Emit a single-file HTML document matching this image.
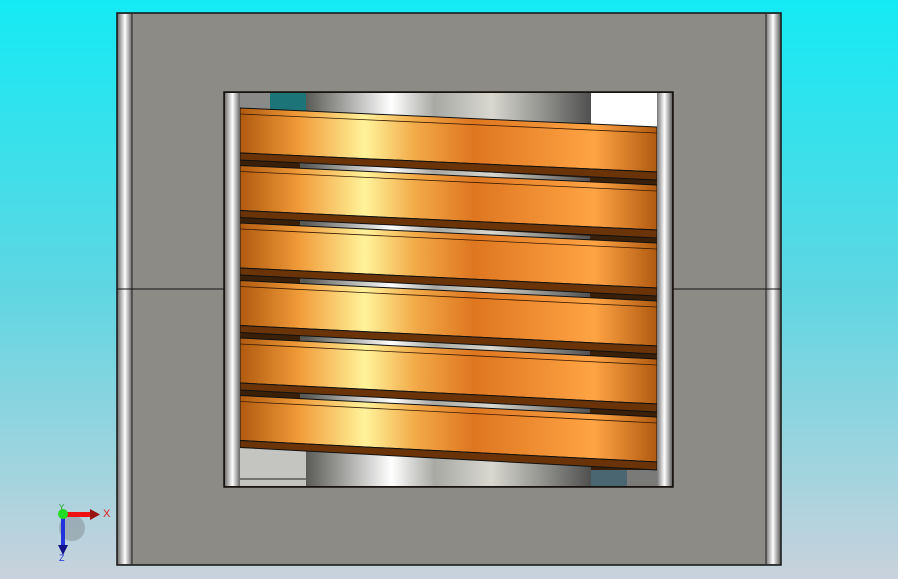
<!DOCTYPE html>
<html><head><style>
html,body{margin:0;padding:0;width:898px;height:579px;overflow:hidden}
</style></head><body>
<svg width="898" height="579" xmlns="http://www.w3.org/2000/svg">
<defs>
<linearGradient id="bg" x1="0" y1="0" x2="0" y2="1">
<stop offset="0" stop-color="#14eaf4"/><stop offset="0.5" stop-color="#5fd6e2"/><stop offset="1" stop-color="#c9d2dc"/>
</linearGradient>
<linearGradient id="cu" x1="240" y1="0" x2="657" y2="0" gradientUnits="userSpaceOnUse">
<stop offset="0" stop-color="#b05a10"/><stop offset="0.14" stop-color="#f09a38"/><stop offset="0.3" stop-color="#fff39a"/><stop offset="0.42" stop-color="#f2aa48"/><stop offset="0.56" stop-color="#de7620"/><stop offset="0.85" stop-color="#ffa444"/><stop offset="1" stop-color="#b05a10"/>
</linearGradient>
<linearGradient id="ag" x1="306" y1="0" x2="591" y2="0" gradientUnits="userSpaceOnUse">
<stop offset="0" stop-color="#5a5a56"/><stop offset="0.3" stop-color="#ffffff"/><stop offset="0.45" stop-color="#a8a8a4"/><stop offset="0.65" stop-color="#d8d8d0"/><stop offset="1" stop-color="#505050"/>
</linearGradient>
<linearGradient id="rod" x1="0" y1="0" x2="1" y2="0">
<stop offset="0" stop-color="#777"/><stop offset="0.5" stop-color="#fff"/><stop offset="1" stop-color="#666"/>
</linearGradient>
</defs>
<rect width="898" height="579" fill="url(#bg)"/>
<rect x="117" y="13" width="664" height="552" fill="#8d8b86" stroke="#111" stroke-width="1.5"/>
<rect x="118" y="14" width="14" height="550" fill="url(#rod)"/>
<rect x="766" y="14" width="14" height="550" fill="url(#rod)"/>
<line x1="132" y1="14" x2="132" y2="564" stroke="#222"/>
<line x1="766" y1="14" x2="766" y2="564" stroke="#222"/>
<line x1="117" y1="289" x2="781" y2="289" stroke="#111"/>
<rect x="224" y="92" width="449" height="395" fill="#3a2008" stroke="#111" stroke-width="1.5"/>
<rect x="240" y="93" width="35" height="22" fill="#8a8a88"/>
<rect x="270" y="93" width="36" height="22" fill="#1c7478"/>
<rect x="306" y="93" width="285" height="30" fill="url(#ag)"/>
<rect x="591" y="93" width="66" height="40" fill="#fff"/>
<rect x="240" y="445" width="66" height="41" fill="#c4c4c0"/>
<line x1="240" y1="479" x2="306" y2="479" stroke="#222"/>
<rect x="306" y="450" width="285" height="36" fill="url(#ag)"/>
<rect x="591" y="470" width="36" height="16" fill="#4a6670"/>
<rect x="627" y="470" width="30" height="16" fill="#7a7a78"/>
<g>
<polygon points="300,162 590,178 590,188 300,168" fill="url(#ag)"/>
<polygon points="300,220 590,236 590,246 300,226" fill="url(#ag)"/>
<polygon points="300,277 590,293 590,303 300,283" fill="url(#ag)"/>
<polygon points="300,335 590,351 590,361 300,341" fill="url(#ag)"/>
<polygon points="300,392 590,408 590,418 300,398" fill="url(#ag)"/>
</g>
<g stroke="#111" stroke-width="1">
<polygon points="240,108 657,127 657,172 240,153" fill="url(#cu)"/>
<polygon points="240,153 657,172 657,180 240,160" fill="#6a3408"/>
<polygon points="240,165.5 657,185 657,230 240,210.5" fill="url(#cu)"/>
<polygon points="240,210.5 657,230 657,238 240,217.5" fill="#6a3408"/>
<polygon points="240,223 657,243 657,288 240,268" fill="url(#cu)"/>
<polygon points="240,268 657,288 657,296 240,275" fill="#6a3408"/>
<polygon points="240,280.5 657,301 657,346 240,325.5" fill="url(#cu)"/>
<polygon points="240,325.5 657,346 657,354 240,332.5" fill="#6a3408"/>
<polygon points="240,338 657,359 657,404 240,383" fill="url(#cu)"/>
<polygon points="240,383 657,404 657,412 240,390" fill="#6a3408"/>
<polygon points="240,395.5 657,417 657,462 240,440.5" fill="url(#cu)"/>
<polygon points="240,440.5 657,462 657,470 240,447.5" fill="#6a3408"/>
</g>
<g stroke="#3a1a04" stroke-width="0.8" fill="none">
<line x1="240" y1="114" x2="657" y2="133"/>
<line x1="240" y1="171.5" x2="657" y2="191"/>
<line x1="240" y1="229" x2="657" y2="249"/>
<line x1="240" y1="286.5" x2="657" y2="307"/>
<line x1="240" y1="344" x2="657" y2="365"/>
<line x1="240" y1="401.5" x2="657" y2="423"/>
</g>
<rect x="225" y="93" width="15" height="393" fill="url(#rod)"/>
<rect x="657" y="93" width="15" height="393" fill="url(#rod)"/>
<circle cx="72" cy="528" r="13" fill="#6a6a70" opacity="0.35"/>
<rect x="61" y="516" width="4" height="32" fill="#2233dd"/>
<polygon points="58,545 68,545 63,555" fill="#111188"/>
<rect x="64" y="512" width="28" height="5" fill="#ee1111"/>
<polygon points="90,509 100,514.5 90,520" fill="#991111"/>
<circle cx="63" cy="514" r="5" fill="#22dd22"/>
<text x="103" y="517" font-family="Liberation Sans, sans-serif" font-size="11" fill="#e02020">X</text>
<text x="59" y="510" font-family="Liberation Sans, sans-serif" font-size="8" fill="#22aa22">Y</text>
<text x="59" y="561" font-family="Liberation Sans, sans-serif" font-size="9" fill="#2233dd">Z</text>
</svg>
</body></html>
